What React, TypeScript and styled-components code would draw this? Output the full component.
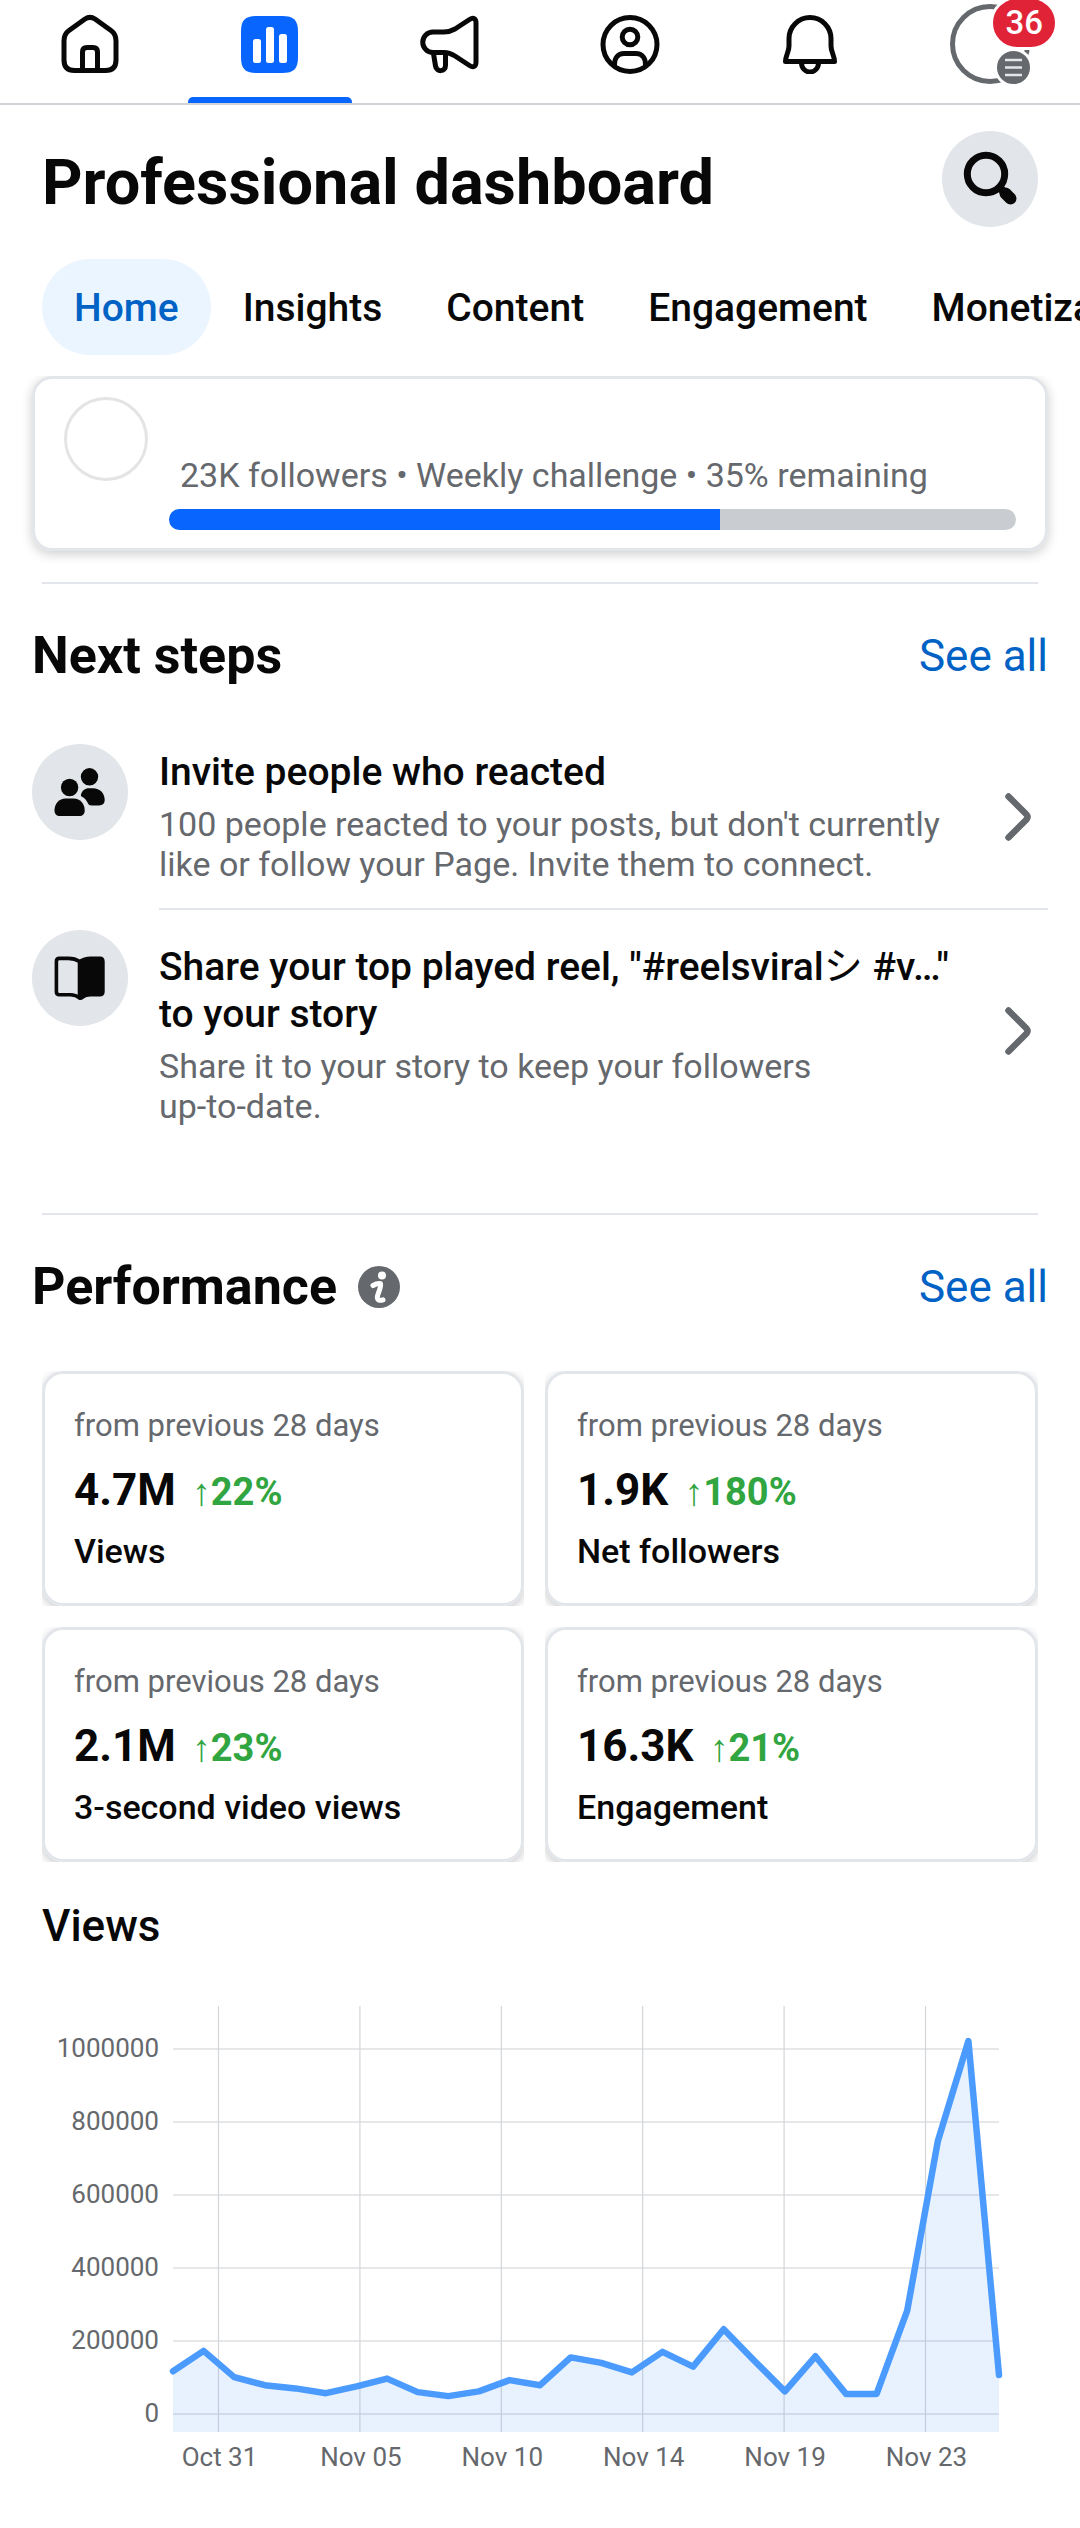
import React from 'react';
import styled, { createGlobalStyle } from 'styled-components';

const color = {
  ink: '#080809',
  muted: '#65686c',
  blue: '#0866ff',
  link: '#0062c4',
  line: '#e2e5e9',
  chip: '#e2e5e9',
  green: '#31a53f',
};

const GlobalStyle = createGlobalStyle`
  * { box-sizing: border-box; }
  body {
    margin: 0;
    background: #fff;
    color: ${color.ink};
    font-family: Roboto, "Noto Sans CJK JP", sans-serif;
  }
  h1, h2, h3, p, ul { margin: 0; padding: 0; }
  button { border: 0; padding: 0; background: none; font: inherit; color: inherit; cursor: pointer; }
  a { text-decoration: none; color: inherit; }
  svg { display: block; }
`;

const Page = styled.div`
  overflow-x: hidden;
  padding-bottom: 52px;
`;

/* ---------- top navigation ---------- */

const NavBar = styled.nav`
  display: flex;
  border-bottom: 2px solid #d0d3d7;
`;

const NavButton = styled.button<{ $active?: boolean }>`
  position: relative;
  flex: 1;
  height: 103px;
  padding-bottom: 15px;
  display: flex;
  align-items: center;
  justify-content: center;

  &::after {
    content: '';
    display: ${(p) => (p.$active ? 'block' : 'none')};
    position: absolute;
    bottom: 0;
    left: 8px;
    right: 8px;
    height: 6px;
    border-radius: 5px 5px 0 0;
    background: ${color.blue};
  }
`;

const Avatar = styled.span`
  position: relative;
  width: 80px;
  height: 80px;
  border: 5px solid ${color.muted};
  border-radius: 50%;
`;

const CountBadge = styled.span`
  position: absolute;
  top: -13px;
  right: -33px;
  padding: 3px 12px;
  border: 3px solid #fff;
  border-radius: 27px;
  background: #e02337;
  color: #fff;
  font-size: 33px;
  font-weight: 500;
  line-height: 42px;
`;

const MenuBadge = styled.span`
  position: absolute;
  right: -8px;
  bottom: -8px;
  width: 39px;
  height: 39px;
  border: 3px solid #fff;
  border-radius: 50%;
  background: ${color.muted};
`;

/* ---------- header and tabs ---------- */

const Header = styled.header`
  display: flex;
  align-items: center;
  justify-content: space-between;
  padding: 26px 42px 32px;
`;

const Title = styled.h1`
  font-size: 63px;
  font-weight: 700;
  line-height: 72px;
  padding-top: 8px;
`;

const RoundButton = styled.button`
  width: 96px;
  height: 96px;
  border-radius: 50%;
  background: ${color.chip};
`;

const Tabs = styled.div`
  display: flex;
  padding-left: 42px;
  overflow: hidden;
`;

const Tab = styled.button<{ $active?: boolean }>`
  flex: none;
  height: 96px;
  padding: 2px 32px 0;
  border-radius: 48px;
  font-size: 39px;
  font-weight: 500;
  color: ${(p) => (p.$active ? color.link : color.ink)};
  background: ${(p) => (p.$active ? '#ebf5ff' : 'transparent')};
`;

/* ---------- challenge card ---------- */

const ChallengeCard = styled.section`
  display: flex;
  gap: 21px;
  margin: 21px 32px 31px;
  padding: 18px 29px;
  height: 175px;
  border: 3px solid ${color.line};
  border-radius: 20px;
  box-shadow: 0 3px 12px rgba(0, 0, 0, 0.2);
  clip-path: inset(0 -24px -24px -24px);
`;

const PagePhoto = styled.span`
  flex: none;
  width: 84px;
  height: 84px;
  border: 3px solid #e4e4e4;
  border-radius: 50%;
`;

const ChallengeBody = styled.div`
  flex: 1;
  display: flex;
  flex-direction: column;
  justify-content: flex-end;
  gap: 14px;
`;

const ChallengeText = styled.p`
  padding-left: 11px;
  font-size: 34px;
  line-height: 40px;
  color: ${color.muted};
`;

const Track = styled.div`
  height: 21px;
  border-radius: 11px;
  overflow: hidden;
  background: #c9ccd1;
`;

const Fill = styled.div`
  height: 100%;
  background: ${color.blue};
`;

/* ---------- sections ---------- */

const Divider = styled.hr`
  height: 2px;
  margin: 0 42px;
  border: 0;
  background: ${color.line};
`;

const SectionHead = styled.div`
  display: flex;
  align-items: center;
  gap: 21px;
  padding: 42px 32px 0;
`;

const SectionTitle = styled.h2`
  font-size: 52px;
  font-weight: 700;
  line-height: 60px;
`;

const SeeAll = styled.a`
  margin-left: auto;
  font-size: 44px;
  line-height: 60px;
  color: ${color.link};
`;

const StepList = styled.ul`
  list-style: none;
  margin: 38px 0 63px;
  padding: 0 32px;
`;

const Step = styled.li`
  display: flex;
  gap: 31px;
`;

const StepIcon = styled.span`
  flex: none;
  width: 96px;
  height: 96px;
  margin-top: 20px;
  border-radius: 50%;
  background: ${color.chip};
`;

const StepLink = styled.a`
  flex: 1;
  display: flex;
  align-items: center;
  gap: 40px;
  padding: 25px 16px 24px 0;

  ${Step}:not(:last-child) & {
    border-bottom: 2px solid ${color.line};
  }
`;

const StepText = styled.div<{ $tall?: boolean }>`
  flex: 1;
  display: flex;
  flex-direction: column;
  gap: 8px;
  padding-top: ${(p) => (p.$tall ? '9px' : '0')};
`;

const StepTitle = styled.h3`
  font-size: 39px;
  font-weight: 500;
  line-height: 47px;
`;

const StepNote = styled.p`
  font-size: 34px;
  line-height: 40px;
  color: ${color.muted};
`;

const NoBreak = styled.span`
  white-space: nowrap;
`;

const Kana = styled.span`
  font-weight: 400;
`;

/* ---------- performance ---------- */

const MetricGrid = styled.div`
  display: grid;
  grid-template-columns: 482fr 493fr;
  gap: 21px;
  padding: 54px 42px 38px;
`;

const MetricFrame = styled.div`
  overflow: hidden;
`;

const MetricCard = styled.article`
  padding: 34px 29px 32px;
  border: 3px solid ${color.line};
  border-radius: 21px;
  box-shadow: 0 3px 10px rgba(0, 0, 0, 0.22);
`;

const MetricPeriod = styled.p`
  font-size: 31px;
  line-height: 36px;
  color: ${color.muted};
`;

const MetricRow = styled.p`
  display: flex;
  align-items: baseline;
  gap: 16px;
  padding: 20px 0 15px;
  font-size: 44px;
  font-weight: 700;
  line-height: 52px;
`;

const Delta = styled.span`
  font-family: Roboto, "Liberation Sans", sans-serif;
  font-size: 38px;
  line-height: 40px;
  color: ${color.green};
`;

const MetricName = styled.h3`
  font-size: 34px;
  font-weight: 500;
  line-height: 40px;
`;

const ChartSection = styled.section`
  padding: 0 42px;
`;

const ChartTitle = styled.h3`
  padding-bottom: 54px;
  font-size: 44px;
  font-weight: 500;
  line-height: 52px;
`;

const ChartSvg = styled.svg`
  width: 100%;
  height: auto;
  overflow: visible;

  text {
    font-size: 26px;
    fill: ${color.muted};
  }
`;

/* ---------- icons ---------- */

const LineIcon = ({ children }: { children: React.ReactNode }) => (
  <svg width="60" height="60" viewBox="0 0 60 60" fill="none" stroke={color.ink} strokeWidth="5" strokeLinejoin="round" strokeLinecap="round" aria-hidden="true">
    {children}
  </svg>
);

const HomeIcon = () => (
  <LineIcon>
    <path d="M4 27c0-5 1.500-8 5-10.500L25 5c3.300-2.200 6.700-2.200 10 0l16 11.500c3.500 2.500 5 5.500 5 10.500v19c0 7-3.500 10.500-10.500 10.500h-31C7.500 56.500 4 53 4 46z" />
    <path d="M22.500 56V38c0-3 1.500-4.500 4.500-4.500h6c3 0 4.500 1.500 4.500 4.500v18" />
  </LineIcon>
);

const DashboardIcon = () => (
  <svg width="60" height="60" viewBox="0 0 60 60" aria-hidden="true">
    <path d="M1 18C1 6 5 2 17 2h25c12 0 16 4 16 16v25c0 12-4 16-16 16H17C5 59 1 55 1 43z" fill={color.blue} />
    <g fill="#fff">
      <rect x="13" y="25" width="8" height="24" rx="2.500" />
      <rect x="26" y="13" width="8" height="36" rx="2.500" />
      <rect x="39" y="20" width="8" height="29" rx="2.500" />
    </g>
  </svg>
);

const MegaphoneIcon = () => (
  <LineIcon>
    <path d="M13 18h11c5 0 7-.8 11-3L49.500 5.500C53.500 3 56 4.500 56 9v39c0 4.500-2.500 6-6.500 3.500L35 42c-4-2.500-6-3.500-11-3.500H13A10.200 10.200 0 0 1 13 18z" />
    <path d="M13.500 39.500l2 12.500c1 6.500 10 6 10-.5v-12" />
  </LineIcon>
);

const ProfileIcon = () => (
  <LineIcon>
    <circle cx="30" cy="30.500" r="27" />
    <circle cx="30" cy="23" r="7.800" />
    <path d="M14.500 50.500C14.500 44 18 39.500 24 39.500h12c6 0 9.500 4.500 9.500 11" />
  </LineIcon>
);

const BellIcon = () => (
  <LineIcon>
    <path d="M9 24.500a21 21 0 0 1 42 0V32c0 6 3.500 9.500 3.500 15.500h-49C5.500 41.500 9 38 9 32z" />
    <path d="M21.500 49a8.500 9 0 0 0 17 0" />
  </LineIcon>
);

const SearchIcon = () => (
  <svg width="96" height="96" viewBox="0 0 96 96" fill="none" stroke={color.ink} strokeLinecap="round" aria-hidden="true">
    <circle cx="44" cy="43" r="18.700" strokeWidth="7" />
    <path d="M58 57l5 5" strokeWidth="8" />
    <path d="M63.500 62.500l5 5" strokeWidth="12" />
  </svg>
);

const PeopleIcon = () => (
  <svg width="96" height="96" viewBox="0 0 96 96" fill={color.ink} aria-hidden="true">
    <circle cx="37.600" cy="43.500" r="8.700" />
    <circle cx="57.500" cy="32.800" r="8.700" />
    <path d="M22.500 66.500c0-7 4.500-12 11-12h8.200c6.500 0 11 5 11 12 0 3.500-2 5.500-5.500 5.500H28c-3.500 0-5.500-2-5.500-5.500z" />
    <path d="M49 50.500c1-4 4-6.300 8-6.300h4c7 0 11.700 5 11.700 11.600 0 3.700-2 5.600-5.700 5.600h-7.500c-2.500 0-3-1-4-3-1.500-2.800-3.500-5-6-6-.6-.4-.7-1-.5-1.900z" />
  </svg>
);

const BookIcon = () => (
  <svg width="96" height="96" viewBox="0 0 96 96" aria-hidden="true">
    <path d="M24.400 31.500c0-2 1-3.100 3-3.100h9c4.500 0 8 1 11.100 3.100v36.500c-2.500-2.200-5-3.300-9-3.300H27.400c-2 0-3-1-3-3z" fill="none" stroke={color.ink} strokeWidth="3.600" strokeLinejoin="round" />
    <path d="M46 30.500c4-2.700 8-4 12.500-4h9.500c3 0 4.700 1.700 4.700 4.700v30.600c0 3-1.700 4.700-4.700 4.700h-9.500c-3 0-5 .8-7 2.300-2 1.600-4 1.600-5.500.2z" fill={color.ink} />
  </svg>
);

const Chevron = () => (
  <svg width="28" height="50" viewBox="0 0 28 50" fill="none" stroke={color.muted} strokeWidth="6.500" strokeLinecap="round" strokeLinejoin="round" aria-hidden="true">
    <path d="M4.500 4.500l18 18q2 2.500 0 5l-18 18" />
  </svg>
);

const InfoIcon = () => (
  <svg width="42" height="42" viewBox="0 0 42 42" role="img" aria-label="About performance">
    <circle cx="21" cy="21" r="21" fill={color.muted} />
    <circle cx="24" cy="9.500" r="4" fill="#fff" />
    <path d="M15 19.500c2.500-1.500 5-2.500 7.500-1.800 1 3.500-3 10-3.200 13.500-.1 3 2.500 3.800 5.700 2.600" fill="none" stroke="#fff" strokeWidth="5" strokeLinecap="round" strokeLinejoin="round" />
  </svg>
);

/* ---------- chart ---------- */

// Daily views, in thousands.
const dailyViews = [
  117, 173, 101, 79, 70, 57, 76, 97, 60, 49, 62, 93, 79, 155,
  140, 114, 170, 130, 232, 146, 62, 158, 55, 55, 283, 747, 1022, 107,
];
const yTicks = [1000000, 800000, 600000, 400000, 200000, 0];
const xTicks = ['Oct 31', 'Nov 05', 'Nov 10', 'Nov 14', 'Nov 19', 'Nov 23'];
const plot = { left: 131, right: 957, top: 0, bottom: 426, zero: 408, per200k: 73 };

const yAt = (views: number) => plot.zero - (views / 200000) * plot.per200k;

function ViewsChart() {
  const step = (plot.right - plot.left) / (dailyViews.length - 1);
  const points = dailyViews
    .map((v, i) => `${(plot.left + i * step).toFixed(1)},${yAt(v * 1000).toFixed(1)}`)
    .join(' ');

  return (
    <ChartSvg viewBox="0 0 996 470" role="img" aria-label="Daily views chart">
      {yTicks.map((tick) => (
        <g key={tick}>
          <line x1={plot.left} x2={plot.right} y1={yAt(tick)} y2={yAt(tick)} stroke="#dddfe2" strokeWidth="1.500" />
          <text x={117} y={yAt(tick) + 8} textAnchor="end">{tick}</text>
        </g>
      ))}
      {xTicks.map((tick, i) => {
        const x = 176.500 + i * 141.400;
        return (
          <g key={tick}>
            <line x1={x} x2={x} y1={plot.top} y2={plot.bottom} stroke="#d3d6da" strokeWidth="1.200" />
            <text x={x + 1} y={460} textAnchor="middle">{tick}</text>
          </g>
        );
      })}
      <polygon
        points={`${plot.left},${plot.bottom} ${points} ${plot.right},${plot.bottom}`}
        fill="#1982ff"
        fillOpacity="0.1"
      />
      <polyline points={points} fill="none" stroke="#4b9bff" strokeWidth="6.500" strokeLinejoin="round" strokeLinecap="round" />
    </ChartSvg>
  );
}

/* ---------- page ---------- */

const metrics = [
  { value: '4.7M', delta: '22%', name: 'Views' },
  { value: '1.9K', delta: '180%', name: 'Net followers' },
  { value: '2.1M', delta: '23%', name: '3-second video views' },
  { value: '16.3K', delta: '21%', name: 'Engagement' },
];

const challengeDone = 65;

export default function App() {
  return (
    <Page>
      <GlobalStyle />
      <NavBar aria-label="Main">
        <NavButton aria-label="Home"><HomeIcon /></NavButton>
        <NavButton aria-label="Dashboard" $active><DashboardIcon /></NavButton>
        <NavButton aria-label="Ads"><MegaphoneIcon /></NavButton>
        <NavButton aria-label="Profile"><ProfileIcon /></NavButton>
        <NavButton aria-label="Notifications"><BellIcon /></NavButton>
        <NavButton aria-label="Menu">
          <Avatar>
            <MenuBadge>
              <svg width="33" height="33" viewBox="0 0 33 33" aria-hidden="true">
                <path d="M8 9h17M8 16.500h17M8 24h17" stroke="#e4e6e8" strokeWidth="2.500" />
              </svg>
            </MenuBadge>
            <CountBadge>36</CountBadge>
          </Avatar>
        </NavButton>
      </NavBar>

      <Header>
        <Title>Professional dashboard</Title>
        <RoundButton aria-label="Search"><SearchIcon /></RoundButton>
      </Header>

      <Tabs role="tablist">
        {['Home', 'Insights', 'Content', 'Engagement', 'Monetization'].map((tab, i) => (
          <Tab key={tab} role="tab" aria-selected={i === 0} $active={i === 0}>{tab}</Tab>
        ))}
      </Tabs>

      <ChallengeCard>
        <PagePhoto />
        <ChallengeBody>
          <ChallengeText>23K followers • Weekly challenge • 35% remaining</ChallengeText>
          <Track role="progressbar" aria-label="Weekly challenge" aria-valuenow={challengeDone}>
            <Fill style={{ width: `${challengeDone}%` }} />
          </Track>
        </ChallengeBody>
      </ChallengeCard>

      <Divider />

      <section>
        <SectionHead>
          <SectionTitle>Next steps</SectionTitle>
          <SeeAll href="#steps">See all</SeeAll>
        </SectionHead>
        <StepList>
          <Step>
            <StepIcon><PeopleIcon /></StepIcon>
            <StepLink href="#invite">
              <StepText>
                <StepTitle>Invite people who reacted</StepTitle>
                <StepNote>100 people reacted to your posts, but don't currently like or follow your Page. Invite them to connect.</StepNote>
              </StepText>
              <Chevron />
            </StepLink>
          </Step>
          <Step>
            <StepIcon><BookIcon /></StepIcon>
            <StepLink href="#share">
              <StepText $tall>
                <StepTitle>Share your top played reel, "#reelsviral<Kana>シ</Kana> #v…" to your story</StepTitle>
                <StepNote>Share it to your story to keep your followers <NoBreak>up-to-date.</NoBreak></StepNote>
              </StepText>
              <Chevron />
            </StepLink>
          </Step>
        </StepList>
      </section>

      <Divider />

      <section>
        <SectionHead>
          <SectionTitle>Performance</SectionTitle>
          <InfoIcon />
          <SeeAll href="#performance">See all</SeeAll>
        </SectionHead>
        <MetricGrid>
          {metrics.map((m) => (
            <MetricFrame key={m.name}>
              <MetricCard>
                <MetricPeriod>from previous 28 days</MetricPeriod>
                <MetricRow>
                  {m.value}
                  <Delta>↑{m.delta}</Delta>
                </MetricRow>
                <MetricName>{m.name}</MetricName>
              </MetricCard>
            </MetricFrame>
          ))}
        </MetricGrid>
      </section>

      <ChartSection>
        <ChartTitle>Views</ChartTitle>
        <ViewsChart />
      </ChartSection>
    </Page>
  );
}
